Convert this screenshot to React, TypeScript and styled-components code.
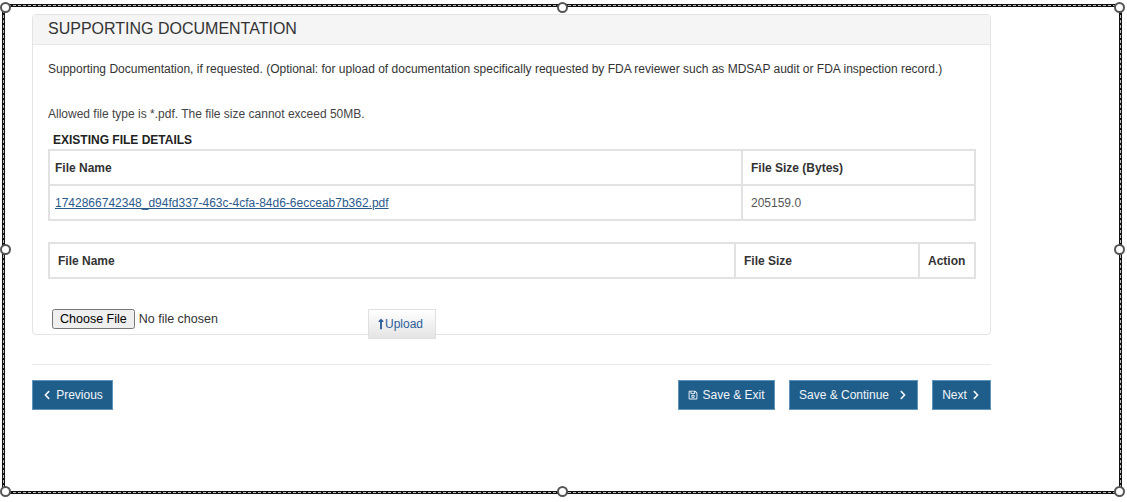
import { FC } from "react";
import { FaChevronLeft, FaChevronRight, FaLongArrowAltUp, FaRegSave } from "react-icons/fa";
import styled, { createGlobalStyle } from "styled-components";

const GlobalStyle = createGlobalStyle`
  html, body {
    margin: 0;
    padding: 0;
    background: #fff;
  }
  body {
    font-family: "Liberation Sans", Arial, sans-serif;
    font-size: 12px;
    color: #333;
  }
`;

const handles = [
  { x: "0%", y: "0%" },
  { x: "50%", y: "0%" },
  { x: "100%", y: "0%" },
  { x: "0%", y: "50%" },
  { x: "100%", y: "50%" },
  { x: "0%", y: "100%" },
  { x: "50%", y: "100%" },
  { x: "100%", y: "100%" },
];

const App: FC = () => {
  return (
    <StPage>
      <GlobalStyle />
      <StFrame>
        {handles.map((h) => (
          <StHandle key={`${h.x}-${h.y}`} style={{ left: h.x, top: h.y }} />
        ))}
        <StPanel>
          <StPanelHeading>SUPPORTING DOCUMENTATION</StPanelHeading>
          <StPanelBody>
            <StIntro>
              Supporting Documentation, if requested. (Optional: for upload of documentation
              specifically requested by FDA reviewer such as MDSAP audit or FDA inspection record.)
            </StIntro>
            <StAllowed>Allowed file type is *.pdf. The file size cannot exceed 50MB.</StAllowed>
            <StTableTitle>EXISTING FILE DETAILS</StTableTitle>
            <StTable>
              <colgroup>
                <col />
                <col width={233} />
              </colgroup>
              <thead>
                <tr>
                  <StHeadCell>File Name</StHeadCell>
                  <StHeadCell $indent={8}>File Size (Bytes)</StHeadCell>
                </tr>
              </thead>
              <tbody>
                <tr>
                  <StCell>
                    <StLink href="#file">1742866742348_d94fd337-463c-4cfa-84d6-6ecceab7b362.pdf</StLink>
                  </StCell>
                  <StCell $indent={8}>205159.0</StCell>
                </tr>
              </tbody>
            </StTable>
            <StUploadTable>
              <colgroup>
                <col />
                <col width={184} />
                <col width={56} />
              </colgroup>
              <thead>
                <tr>
                  <StHeadCell $indent={8}>File Name</StHeadCell>
                  <StHeadCell $indent={8}>File Size</StHeadCell>
                  <StHeadCell $indent={8}>Action</StHeadCell>
                </tr>
              </thead>
            </StUploadTable>
            <StUploadRow>
              <StFileInput type="file" />
              <StUploadButton type="button">
                <FaLongArrowAltUp />
                Upload
              </StUploadButton>
            </StUploadRow>
          </StPanelBody>
        </StPanel>
        <StDivider />
        <StActions>
          <StActionButton type="button">
            <FaChevronLeft />
            Previous
          </StActionButton>
          <StActionGroup>
            <StActionButton type="button" $width={97}>
              <StSaveIcon />
              Save &amp; Exit
            </StActionButton>
            <StActionButton type="button" $width={129}>
              Save &amp; Continue
              <StTrailing />
            </StActionButton>
            <StActionButton type="button" $width={59}>
              Next
              <FaChevronRight />
            </StActionButton>
          </StActionGroup>
        </StActions>
      </StFrame>
    </StPage>
  );
};

export default App;

const StPage = styled.div`
  width: 1127px;
  height: 502px;
  padding: 4px 5px 8px 2px;
  box-sizing: border-box;
  overflow: hidden;
`;

const StFrame = styled.div`
  position: relative;
  box-sizing: border-box;
  height: 490px;
  border: 3px solid #111;
  padding: 7px 128px 0 27px;

  &::before {
    content: "";
    position: absolute;
    inset: -2px;
    border: 1px dashed #bbb;
    pointer-events: none;
  }
`;

const StHandle = styled.span`
  position: absolute;
  width: 11px;
  height: 11px;
  box-sizing: border-box;
  margin: -5.5px 0 0 -5.5px;
  border: 2px solid #555;
  border-radius: 50%;
  background: #fff;
  z-index: 2;
`;

const StPanel = styled.section`
  box-sizing: border-box;
  width: 959px;
  height: 321px;
  border: 1px solid #e4e4e4;
  border-radius: 4px;
`;

const StPanelHeading = styled.h2`
  margin: 0;
  box-sizing: border-box;
  height: 30px;
  padding: 0 15px;
  background: #f5f5f5;
  border-bottom: 1px solid #e8e8e8;
  border-radius: 3px 3px 0 0;
  font-size: 16px;
  font-weight: 400;
  line-height: 28px;
  color: #333;
`;

const StPanelBody = styled.div`
  padding: 0 15px;
`;

const StIntro = styled.p`
  margin: 16px 0 0;
  font-size: 12px;
  line-height: 16px;
  color: #333;
`;

const StAllowed = styled.p`
  margin: 29px 0 0;
  font-size: 12px;
  line-height: 16px;
  color: #444;
`;

const StTableTitle = styled.h3`
  margin: 11px 0 0 5px;
  font-size: 12px;
  font-weight: 700;
  line-height: 14px;
  color: #222;
`;

const StTable = styled.table`
  width: 928px;
  margin-top: 2px;
  border-collapse: collapse;
  table-layout: fixed;
  border: 2px solid #e2e2e2;
`;

const StUploadTable = styled(StTable)`
  margin-top: 21px;
`;

const StHeadCell = styled.th<{ $indent?: number }>`
  height: 33px;
  padding: 0 0 0 ${(p) => p.$indent ?? 5}px;
  border: 2px solid #e2e2e2;
  font-size: 12px;
  font-weight: 700;
  text-align: left;
  color: #333;
`;

const StCell = styled.td<{ $indent?: number }>`
  height: 33px;
  padding: 0 0 0 ${(p) => p.$indent ?? 5}px;
  border: 2px solid #e2e2e2;
  font-size: 12px;
  color: #555;
`;

const StLink = styled.a`
  color: #2a5a8c;
  text-decoration: underline;
`;

const StUploadRow = styled.div`
  display: flex;
  align-items: flex-start;
  margin-top: 30px;
  padding-left: 4px;
`;

const StFileInput = styled.input`
  width: 316px;
  font-family: "Liberation Sans", Arial, sans-serif;
  font-size: 12.5px;
  color: #333;
`;

const StUploadButton = styled.button`
  display: inline-flex;
  align-items: center;
  box-sizing: border-box;
  width: 68px;
  height: 30px;
  padding: 0 0 0 8px;
  border: 1px solid #e0e0e0;
  background: linear-gradient(#fff, #e4e4e4);
  font-family: inherit;
  font-size: 12px;
  color: #2d5f9a;

  svg {
    width: 8px;
    height: 12px;
    color: #2d5f9a;
  }
`;

const StDivider = styled.hr`
  width: 959px;
  margin: 29px 0 15px;
  border: 0;
  border-top: 1px solid #e9e9e9;
`;

const StActions = styled.div`
  display: flex;
  justify-content: space-between;
  width: 959px;
`;

const StActionGroup = styled.div`
  display: flex;
  gap: 14px;
`;

const StActionButton = styled.button<{ $width?: number }>`
  display: inline-flex;
  align-items: center;
  justify-content: center;
  gap: 4px;
  box-sizing: border-box;
  width: ${(p) => p.$width ?? 81}px;
  height: 30px;
  padding: 0;
  border: 1px solid #5f94bd;
  background: #1f5d8a;
  font-family: inherit;
  font-size: 12px;
  color: #f2f6fa;

  svg {
    width: 10px;
    height: 10px;
  }
`;

const StSaveIcon = styled(FaRegSave)`
  flex: none;
`;

const StTrailing = styled(FaChevronRight)`
  margin-left: 5px;
`;
